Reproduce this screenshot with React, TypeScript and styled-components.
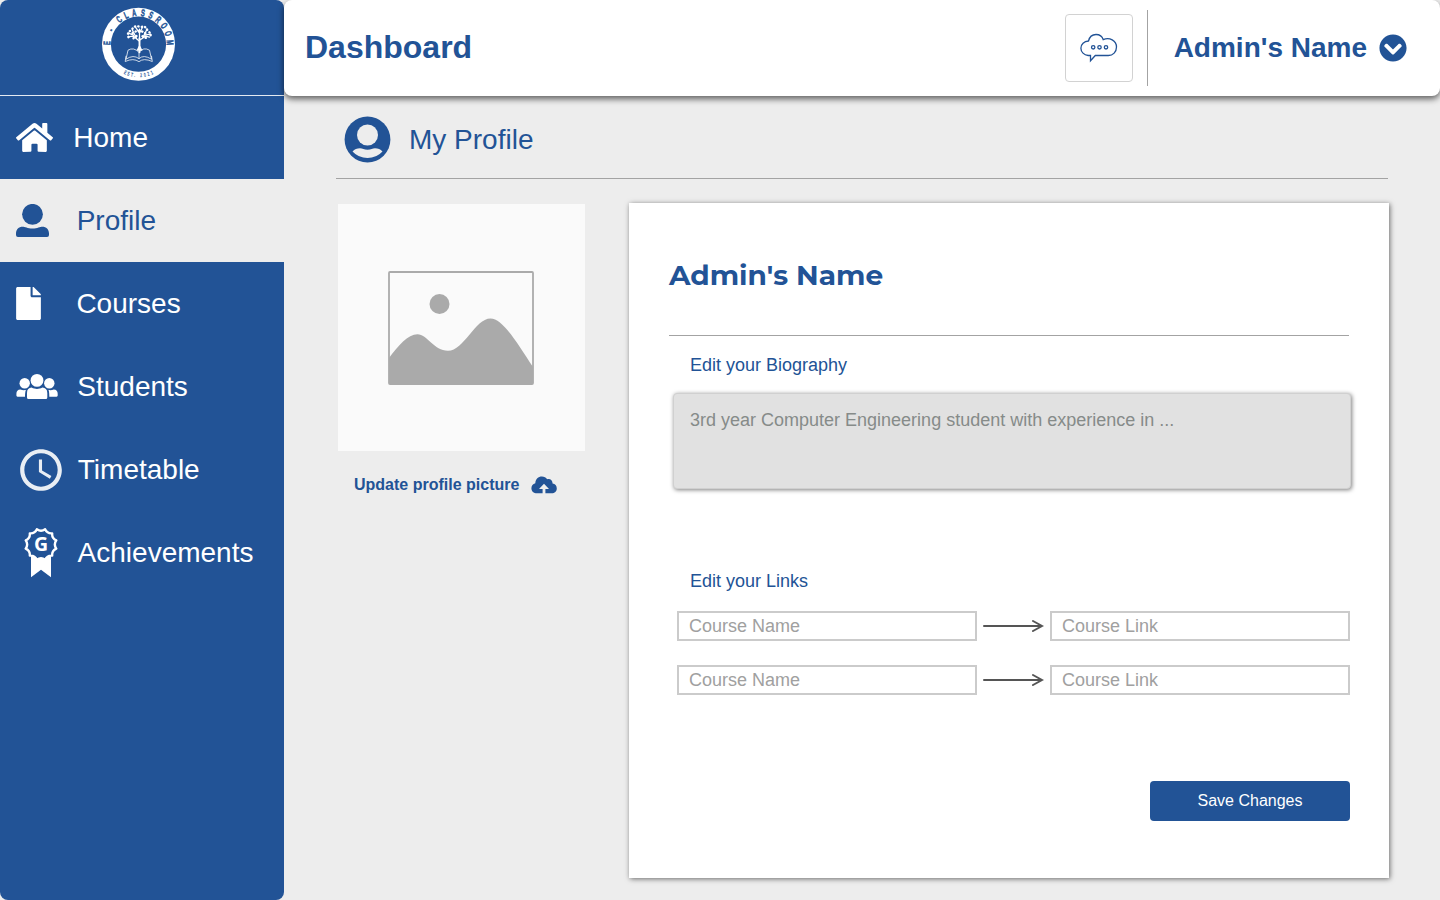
import React from "react";
import styled, { createGlobalStyle } from "styled-components";
import { FaHome, FaFile, FaChevronCircleDown } from "react-icons/fa";
import { MdAccessTime } from "react-icons/md";

const BLUE = "#225396";
const PAPER = "#ededed";

const GlobalStyle = createGlobalStyle`
  *, *::before, *::after { box-sizing: border-box; }
  body {
    margin: 0;
    background: ${PAPER};
    font-family: "Liberation Sans", Arial, sans-serif;
    overflow: hidden;
  }
`;

const Page = styled.div`
  display: flex;
  width: 1440px;
  height: 900px;
  background: ${PAPER};
`;

const Sidebar = styled.aside`
  display: flex;
  flex-direction: column;
  flex: 0 0 284px;
  background: ${BLUE};
  border-radius: 8px;
`;

const LogoArea = styled.div`
  display: flex;
  justify-content: center;
  height: 96px;
  padding: 7px 7px 0 0;
  border-bottom: 1px solid #e4eaf2;
`;

const Nav = styled.nav`
  display: flex;
  flex-direction: column;
`;

const NavItem = styled.a<{ $active?: boolean }>`
  display: flex;
  align-items: center;
  height: 83px;
  padding-left: 16px;
  font-size: 28px;
  color: ${(p) => (p.$active ? BLUE : "#fff")};
  background: ${(p) => (p.$active ? PAPER : "transparent")};
`;

const NavIcon = styled.span<{ $width: number }>`
  display: flex;
  align-items: center;
  flex: 0 0 ${(p) => p.$width}px;
  svg { flex: none; }
`;

const Main = styled.div`
  display: flex;
  flex-direction: column;
  flex: 1;
`;

const Header = styled.header`
  display: flex;
  align-items: center;
  height: 96px;
  padding: 0 33px 0 21px;
  background: #fff;
  border-radius: 8px;
  box-shadow: 0 3px 6px rgba(0, 0, 0, 0.6);
  color: ${BLUE};
`;

const PageTitle = styled.h1`
  flex: 1;
  margin: 0;
  padding-bottom: 2px;
  font-size: 32px;
  line-height: 36px;
`;

const MessageButton = styled.button`
  display: flex;
  align-items: center;
  justify-content: center;
  width: 68px;
  height: 68px;
  padding: 0;
  background: #fff;
  border: 1px solid #d2d2d2;
  border-radius: 4px;
`;

const HeaderDivider = styled.div`
  width: 1px;
  height: 76px;
  margin: 0 26px 0 14px;
  background: #a3a3a3;
`;

const AccountName = styled.span`
  margin-right: 12px;
  font-size: 28px;
  font-weight: bold;
`;

const Content = styled.main`
  display: flex;
  flex-direction: column;
  padding: 0 51px 0 52px;
`;

const SectionTitle = styled.div`
  display: flex;
  align-items: center;
  gap: 18px;
  height: 83px;
  margin-right: 1px;
  padding: 4px 0 0 8px;
  border-bottom: 1px solid #a3a3a3;
  color: ${BLUE};
  font-size: 28px;
`;

const SectionName = styled.span`
  padding-top: 2px;
`;

const Columns = styled.div`
  display: flex;
  justify-content: space-between;
  padding: 24px 0 0 2px;
`;

const PictureColumn = styled.div`
  width: 247px;
  padding-top: 1px;
`;

const PicturePlaceholder = styled.div`
  display: flex;
  align-items: center;
  justify-content: center;
  height: 247px;
  padding-right: 1px;
  background: #fafafa;
`;

const UploadLink = styled.a`
  display: flex;
  align-items: center;
  gap: 12px;
  padding: 25px 0 0 16px;
  color: ${BLUE};
  font-size: 16px;
  font-weight: bold;
  line-height: 18px;
`;

const Card = styled.form`
  display: flex;
  flex-direction: column;
  width: 760px;
  height: 675px;
  padding: 0 39px 0 40px;
  background: #fff;
  box-shadow: 1px 1px 5px rgba(0, 0, 0, 0.55);
`;

const CardName = styled.h2`
  height: 133px;
  margin: 0 1px 0 0;
  padding-top: 55px;
  border-bottom: 1px solid #a3a3a3;
  color: ${BLUE};
  font-family: Montserrat, Inter, sans-serif;
  font-size: 28px;
  font-weight: 700;
  line-height: 34px;
`;

const FieldLabel = styled.label`
  margin: 18px 0 0 21px;
  color: ${BLUE};
  font-size: 18px;
  line-height: 22px;
`;

const Biography = styled.textarea`
  width: 678px;
  height: 96px;
  margin: 17px -2px 1px 4px;
  padding: 15px 16px;
  background: #e1e1e1;
  border: 1px solid #d0d0d0;
  border-radius: 4px;
  box-shadow: 1px 1px 4px rgba(0, 0, 0, 0.5);
  font: 18px/22px "Liberation Sans", Arial, sans-serif;
  resize: none;
  &::placeholder { color: #868b89; opacity: 1; }
`;

const LinksGroup = styled.div`
  display: flex;
  flex-direction: column;
  padding-top: 62px;
`;

const LinkRow = styled.div`
  display: flex;
  align-items: center;
  gap: 6px;
  margin: 0 0 24px 8px;
`;

const LinkInput = styled.input`
  width: 300px;
  height: 30px;
  padding: 0 10px;
  border: 2px solid #cbcbcb;
  border-radius: 0;
  background: #fff;
  font: 18px "Liberation Sans", Arial, sans-serif;
  &::placeholder { color: #a0a0a0; opacity: 1; }
`;

const LinkRows = styled.div`
  padding-top: 19px;
`;

const SaveButton = styled.button`
  align-self: flex-end;
  width: 200px;
  height: 40px;
  margin-top: 62px;
  padding: 0 0 1px;
  border: 0;
  border-radius: 4px;
  background: ${BLUE};
  color: #fff;
  font: 16px "Liberation Sans", Arial, sans-serif;
`;

const ringTop: [string, number][] = [
  ["E", -88], ["-", -63], ["C", -38], ["L", -23], ["A", -8], ["S", 8],
  ["S", 23], ["R", 39], ["O", 54], ["O", 70], ["M", 87],
];

const ringBottom: [string, number][] = [
  ["E", 25], ["S", 18.5], ["T", 12], [".", 7], ["2", -4.5], ["0", -11.5], ["2", -18.5], ["1", -25],
];

const Logo = () => (
  <svg width="75" height="75" viewBox="-37.5 -37.2 75 75">
    <circle r="36.5" fill="#fff" />
    <circle r="27.6" fill={BLUE} />
    <g fill={BLUE} stroke={BLUE} fontFamily="'Liberation Sans', sans-serif" fontWeight="bold" textAnchor="middle">
      {ringTop.map(([letter, angle]) => (
        <text key={angle} fontSize="9.8" strokeWidth="0.5" transform={`rotate(${angle}) translate(0 -28.2) scale(0.6 1)`}>{letter}</text>
      ))}
      {ringBottom.map(([letter, angle]) => (
        <text key={angle} fontSize="5.8" strokeWidth="0" transform={`rotate(${angle}) translate(0 33.2) scale(0.6 1)`}>{letter}</text>
      ))}
    </g>
    <g fill="none" stroke="#fff" strokeLinecap="round">
      <path strokeWidth="1.9" d="M1 8V-6" />
      <path strokeWidth="1.3" d="M1 -3L-5 -8L-9 -7.5M1 -4L7 -8L11 -7M1 -6V-15M-2 -6L-6 -14M4 -6L8 -14M1 -11L-3 -17M1 -11L4 -17M-5 -9L-10 -11M6 -9L12 -10" />
      <path strokeWidth="2.4" strokeDasharray="0.3 3.1" d="M-10 -7Q-12 -12 -7 -14Q-4 -20 2 -17Q8 -19 9 -13Q14 -11 11 -6M-6 -11Q1 -16 8 -10M-5 -6L-1 -9M4 -8L8 -6" />
      <path strokeWidth="0.9" strokeOpacity="0.85" d="M0.500 8Q-5 2.500 -10.500 6L-12.500 15Q-5 10 0.500 14.500Q5 10 13 15L11 6Q5 2.500 0.500 8V14M-12.500 12L-13.300 17.300Q-5 13.500 0.500 17.500Q5 13.500 13.800 17.300L13 12" />
    </g>
    <path fill="#fff" d="M0 2h2l2 4.500h-6z" />
  </svg>
);

const UserIcon = () => (
  <svg width="33" height="33" viewBox="0 0 33 33" fill="currentColor">
    <circle cx="16.5" cy="10.3" r="10.4" />
    <path d="M0 31v-1.500C0 25.300 2.800 22.700 6.600 22.700c2.400 0 4.800 1.700 9.900 1.700s7.500-1.700 9.900-1.700c3.800 0 6.600 2.600 6.600 6.800V31q0 2-2 2H2q-2 0-2-2z" />
  </svg>
);

const StudentsIcon = () => (
  <svg width="42" height="25" viewBox="0 0 42 25" fill="currentColor">
    <circle cx="21" cy="6.4" r="6.4" />
    <circle cx="8.7" cy="9.3" r="5.2" />
    <circle cx="33.3" cy="9.3" r="5.2" />
    <path d="M11 23.500v-4.500c0-3.500 1.700-5.200 4.600-5.400 1.900 1 3.500 1.300 5.400 1.300s3.500-.3 5.400-1.300c2.900.2 4.900 1.900 4.900 5.400v4.500q0 1.500-1.500 1.500H12.500q-1.500 0-1.500-1.500z" />
    <path d="M.4 21.600v-1.900c0-2.800 1.300-4.200 4-4.300 1.500.8 3.500.9 5.500.6-.7 1.600-.9 4-.9 6.700H1.500q-1.100 0-1.100-1.100z" />
    <path d="M41.700 21.600v-1.900c0-2.800-1.300-4.200-4-4.300-1.500.8-3.200.9-5.200.6.700 1.600.8 4 .8 6.700h7.300q1.100 0 1.100-1.100z" />
  </svg>
);

// Twelve outward points joined by shallow inward curves.
const scallop = (cx: number, cy: number, outer: number, inner: number) => {
  const at = (deg: number, r: number) => {
    const a = (deg * Math.PI) / 180;
    return `${(cx + r * Math.cos(a)).toFixed(2)} ${(cy + r * Math.sin(a)).toFixed(2)}`;
  };
  let d = `M${at(-15, outer)}`;
  for (let i = 0; i < 12; i++) d += `Q${at(i * 30, inner)} ${at(i * 30 + 15, outer)}`;
  return d + "Z";
};

const AwardIcon = () => (
  <svg width="50" height="50" viewBox="0 0 50 50">
    <path fill="#fff" d="M15 26.500l4 3.500q3 1 6-1.500q3 2.500 6 1.500l4-3.500v22.800l-10-7.500-10 7.500z" />
    <path d={scallop(25, 16.5, 15.8, 12.4)} fill={BLUE} stroke="#fff" strokeWidth="2.4" strokeLinejoin="round" />
    <text x="25" y="23.3" textAnchor="middle" fill="#fff" fontFamily="'Open Sans', sans-serif" fontWeight="bold" fontSize="19.5">G</text>
  </svg>
);

const ChatCloudIcon = () => (
  <svg width="38" height="30" viewBox="0 0 38 30" fill="none" stroke={BLUE} strokeWidth="1.3">
    <path d="M10.500 22.500H8.200C4 22 .9 19 .9 15.200c0-3.900 3.200-6.900 7.600-7.200C9.500 3.800 12.400 1.500 16 1.500c3.500 0 6.300 2 7.200 5.100C29.500 3.800 36.500 7.500 36.500 14.100c0 4.800-3.500 8.400-8.200 8.400H15.300L10.500 27.800z" />
    <circle cx="13.2" cy="14.3" r="1.7" />
    <circle cx="19.5" cy="14.3" r="1.7" />
    <circle cx="26" cy="14.3" r="1.7" />
  </svg>
);

const ProfileCircleIcon = () => (
  <svg width="47" height="47" viewBox="0 0 47 47">
    <circle cx="23.5" cy="23.5" r="22.9" fill={BLUE} />
    <circle cx="23.5" cy="19" r="10.5" fill={PAPER} />
    <path fill={PAPER} d="M8.500 35.500Q11.500 32.200 16 32.200C18.500 32.200 20 33.700 23.500 33.700S28.500 32.200 31 32.200Q35.500 32.200 38.500 35.500Q32.500 42 23.500 42T8.500 35.500z" />
  </svg>
);

const PictureIcon = () => (
  <svg width="146" height="114" viewBox="0 0 146 114">
    <rect x="1" y="1" width="144" height="112" rx="1" fill="none" stroke="#aaa" strokeWidth="1.8" />
    <circle cx="51.5" cy="33" r="10" fill="#aaa" />
    <path fill="#aaa" d="M1 87C10 75 20 63.300 29.500 63.300C39 63.300 46 79.800 60 79.800C76 79.800 87 47.500 102.500 47.500C115 47.500 130 73.500 145 96V113H1z" />
  </svg>
);

const UploadCloudIcon = () => (
  <svg width="26" height="18" viewBox="0 0 26 18">
    <path fill={BLUE} d="M6 17.300C2.700 17.300.4 15.300.4 12.300c0-2.500 1.500-4.300 3.900-5C4.500 3.300 7.300.6 10.900.6c2.200 0 4.100 1 5.200 2.700 3-.9 5.500 1 5.500 4.300 2.500.4 4.200 2.300 4.200 4.800 0 2.900-2.200 4.900-5 4.900z" />
    <path fill={PAPER} d="M13 7.800l5 5.300h-3.600V18h-2.800v-4.900H8z" />
  </svg>
);

const ArrowIcon = () => (
  <svg width="61" height="14" viewBox="0 0 61 14" fill="none" stroke="#555" strokeWidth="2" strokeLinecap="round">
    <path d="M1 7H59M50 2L59 7L50 12" />
  </svg>
);

const navItems = [
  { label: "Home", icon: <FaHome size={37} />, width: 57.3 },
  { label: "Profile", icon: <UserIcon />, width: 60.7, active: true },
  { label: "Courses", icon: <FaFile style={{ width: 25, height: 33 }} />, width: 60.4 },
  { label: "Students", icon: <StudentsIcon />, width: 61.3 },
  { label: "Timetable", icon: <MdAccessTime size={50} opacity={0.9} />, width: 61.8 },
  { label: "Achievements", icon: <AwardIcon />, width: 61.6 },
];

export default function App() {
  return (
    <>
      <GlobalStyle />
      <Page>
        <Sidebar>
          <LogoArea>
            <Logo />
          </LogoArea>
          <Nav>
            {navItems.map((item) => (
              <NavItem key={item.label} $active={item.active}>
                <NavIcon $width={item.width}>{item.icon}</NavIcon>
                {item.label}
              </NavItem>
            ))}
          </Nav>
        </Sidebar>
        <Main>
          <Header>
            <PageTitle>Dashboard</PageTitle>
            <MessageButton type="button" aria-label="Messages">
              <ChatCloudIcon />
            </MessageButton>
            <HeaderDivider />
            <AccountName>Admin's Name</AccountName>
            <FaChevronCircleDown size={28} />
          </Header>
          <Content>
            <SectionTitle>
              <ProfileCircleIcon />
              <SectionName>My Profile</SectionName>
            </SectionTitle>
            <Columns>
              <PictureColumn>
                <PicturePlaceholder>
                  <PictureIcon />
                </PicturePlaceholder>
                <UploadLink>
                  Update profile picture
                  <UploadCloudIcon />
                </UploadLink>
              </PictureColumn>
              <Card>
                <CardName>Admin's Name</CardName>
                <FieldLabel htmlFor="biography">Edit your Biography</FieldLabel>
                <Biography id="biography" placeholder="3rd year Computer Engineering student with experience in ..." />
                <LinksGroup>
                  <FieldLabel as="div">Edit your Links</FieldLabel>
                  <LinkRows>
                    {[0, 1].map((row) => (
                      <LinkRow key={row}>
                        <LinkInput placeholder="Course Name" />
                        <ArrowIcon />
                        <LinkInput placeholder="Course Link" />
                      </LinkRow>
                    ))}
                  </LinkRows>
                </LinksGroup>
                <SaveButton type="button">Save Changes</SaveButton>
              </Card>
            </Columns>
          </Content>
        </Main>
      </Page>
    </>
  );
}
